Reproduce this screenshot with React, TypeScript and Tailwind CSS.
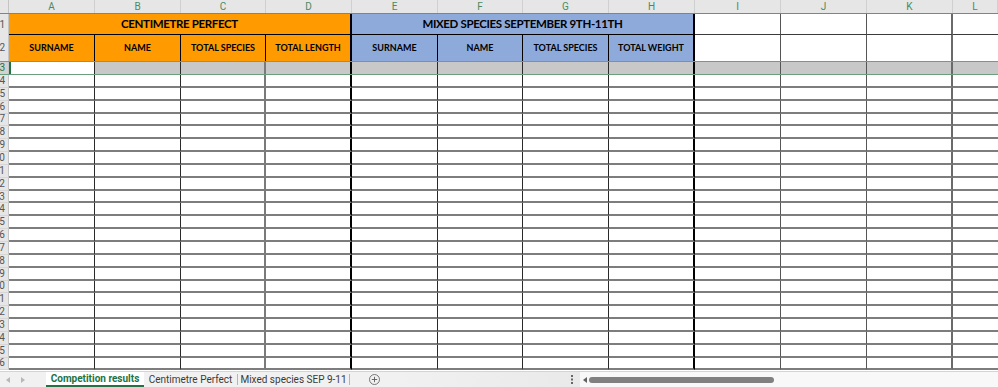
const COLS = ["A", "B", "C", "D", "E", "F", "G", "H", "I", "J", "K", "L"];

const WIDTHS = [
  "w-[86px]",
  "w-[86px]",
  "w-[85px]",
  "w-[86px]",
  "w-[86px]",
  "w-[85px]",
  "w-[86px]",
  "w-[86px]",
  "w-[86px]",
  "w-[86px]",
  "w-[86px]",
  "flex-1",
];

// right-hand borders for the grid body
const RIGHT = [
  "border-r border-r-[#2a2a2a]",
  "border-r border-r-[#2a2a2a]",
  "border-r-2 border-r-[#7a7a7a]",
  "border-r-2 border-r-black",
  "border-r border-r-[#2a2a2a]",
  "border-r border-r-[#2a2a2a]",
  "border-r border-r-[#2a2a2a]",
  "border-r-2 border-r-black",
  "border-r border-r-[#555]",
  "border-r border-r-[#555]",
  "border-r-2 border-r-[#6a6a6a]",
  "",
];

const HEADS = ["SURNAME", "NAME", "TOTAL SPECIES", "TOTAL LENGTH", "SURNAME", "NAME", "TOTAL SPECIES", "TOTAL WEIGHT"];

const calibri = { fontFamily: "Lato, 'Liberation Sans', sans-serif" };

function RowNum({ n, active, className = "" }: { n: number; active?: boolean; className?: string }) {
  return (
    <div
      className={`w-[9px] shrink-0 flex items-center justify-end overflow-hidden pr-[3px] text-[10px] leading-none border-r border-r-[#c4c4c4] ${
        active ? "bg-[#d2d2d2] text-[#217346]" : "bg-[#e6e6e6] text-[#555]"
      } ${className}`}
    >
      <span className="whitespace-nowrap">{n}</span>
    </div>
  );
}

export default function App() {
  const bodyRows = Array.from({ length: 23 }, (_, i) => i + 4);

  return (
    <div
      className="w-[998px] h-[387px] flex flex-col overflow-hidden bg-white"
      style={{ fontFamily: "Roboto, 'Liberation Sans', sans-serif" }}
    >
      {/* column letters */}
      <div className="flex h-[14px] shrink-0 bg-[#e6e6e6] border-b border-b-[#5d9a74]">
        <div className="w-[9px] shrink-0 border-r border-r-[#c4c4c4]" />
        {COLS.map((c, i) => (
          <div
            key={c}
            className={`${WIDTHS[i]} shrink-0 flex items-center justify-center text-[10px] leading-none text-[#4a8a63] border-r border-r-[#d0d0d0]`}
          >
            {c}
          </div>
        ))}
      </div>

      {/* row 1 - titles */}
      <div className="flex h-[21px] shrink-0">
        <RowNum n={1} />
        <div
          className="w-[343px] shrink-0 flex items-center justify-center bg-[#ff9a00] border-r-2 border-r-black border-b border-b-black text-[11.5px] tracking-[-0.35px] font-bold text-black"
          style={calibri}
        >
          CENTIMETRE PERFECT
        </div>
        <div
          className="w-[343px] shrink-0 flex items-center justify-center bg-[#8eaadb] border-r-2 border-r-black border-b border-b-black text-[11.5px] tracking-[-0.35px] font-bold text-black"
          style={calibri}
        >
          MIXED SPECIES SEPTEMBER 9TH-11TH
        </div>
        {COLS.slice(8).map((c, j) => (
          <div key={c} className={`${WIDTHS[8 + j]} shrink-0 border-b border-b-[#3a3a3a] ${RIGHT[8 + j]}`} />
        ))}
      </div>

      {/* row 2 - headings */}
      <div className="flex h-[26px] shrink-0">
        <RowNum n={2} />
        {COLS.map((c, i) => {
          const bg = i < 4 ? "bg-[#ff9a00]" : i < 8 ? "bg-[#8eaadb]" : "bg-white";
          const right =
            i === 3 || i === 7
              ? "border-r-2 border-r-black"
              : i < 8
              ? "border-r border-r-black"
              : RIGHT[i];
          return (
            <div
              key={c}
              className={`${WIDTHS[i]} shrink-0 flex items-center justify-center ${bg} ${right} text-[9px] font-bold text-black`}
              style={calibri}
            >
              {HEADS[i] ?? ""}
            </div>
          );
        })}
      </div>

      {/* row 3 - selected row */}
      <div className="flex h-[14px] shrink-0 border-y border-y-[#6b9f7f]">
        <RowNum n={3} active />
        {COLS.map((c, i) => (
          <div
            key={c}
            className={`${WIDTHS[i]} shrink-0 ${
              i === 0 ? "bg-white border-l-2 border-l-[#217346]" : "bg-[#c8c8c8]"
            } ${RIGHT[i]}`}
          />
        ))}
      </div>

      {/* empty rows */}
      <div className="flex-1 flex flex-col overflow-hidden">
        {bodyRows.map((n) => (
          <div key={n} className="flex h-[12.85px] shrink-0">
            <RowNum n={n} className="border-b border-b-[#d6d6d6]" />
            {COLS.map((c, i) => (
              <div
                key={c}
                className={`${WIDTHS[i]} shrink-0 border-b-2 border-b-[#7d7d7d] ${RIGHT[i]}`}
              />
            ))}
          </div>
        ))}
      </div>

      {/* sheet tabs */}
      <div className="h-[16px] shrink-0 flex bg-[#f1f1f1] border-t border-t-[#d4d4d4] text-[10px] leading-none">
        <div className="w-[46px] shrink-0 flex items-center pl-[6px] gap-[11px]">
          <svg width="4" height="6" viewBox="0 0 4 6">
            <path d="M4 0L0 3l4 3z" fill="#b8b8b8" />
          </svg>
          <svg width="4" height="6" viewBox="0 0 4 6">
            <path d="M0 0l4 3-4 3z" fill="#b8b8b8" />
          </svg>
        </div>
        <div className="w-[98px] shrink-0 flex items-center justify-center bg-white border-b-2 border-b-[#217346] font-bold text-[#217346] whitespace-nowrap">
          Competition results
        </div>
        <div className="w-[94px] shrink-0 flex items-center justify-center text-[#3a3a3a] border-r border-r-[#b5b5b5] my-[2px] whitespace-nowrap">
          Centimetre Perfect
        </div>
        <div className="w-[112px] shrink-0 flex items-center justify-center text-[#3a3a3a] border-r border-r-[#b5b5b5] my-[2px] whitespace-nowrap">
          Mixed species SEP 9-11
        </div>
        <div className="w-[48px] shrink-0 flex items-center justify-center">
          <svg width="11" height="11" viewBox="0 0 11 11">
            <circle cx="5.5" cy="5.5" r="5" fill="none" stroke="#6a6a6a" strokeWidth="0.9" />
            <path d="M5.5 2.8v5.4M2.8 5.5h5.4" stroke="#5a5a5a" strokeWidth="0.9" />
          </svg>
        </div>
        <div className="flex-1 flex items-center justify-end pr-[7px] bg-gradient-to-r from-[#f1f1f1] to-[#e9e9e9]">
          <svg width="2" height="9" viewBox="0 0 2 9">
            <rect x="0" y="0" width="2" height="2" fill="#666" />
            <rect x="0" y="3.5" width="2" height="2" fill="#666" />
            <rect x="0" y="7" width="2" height="2" fill="#666" />
          </svg>
        </div>
        <div className="w-[418px] shrink-0 flex items-center bg-[#f8f8f8] pl-[3px]">
          <svg width="4" height="6" viewBox="0 0 4 6">
            <path d="M4 0L0 3l4 3z" fill="#606060" />
          </svg>
          <div className="ml-[2px] w-[185px] h-[6px] rounded-full bg-[#808080]" />
        </div>
      </div>
    </div>
  );
}
